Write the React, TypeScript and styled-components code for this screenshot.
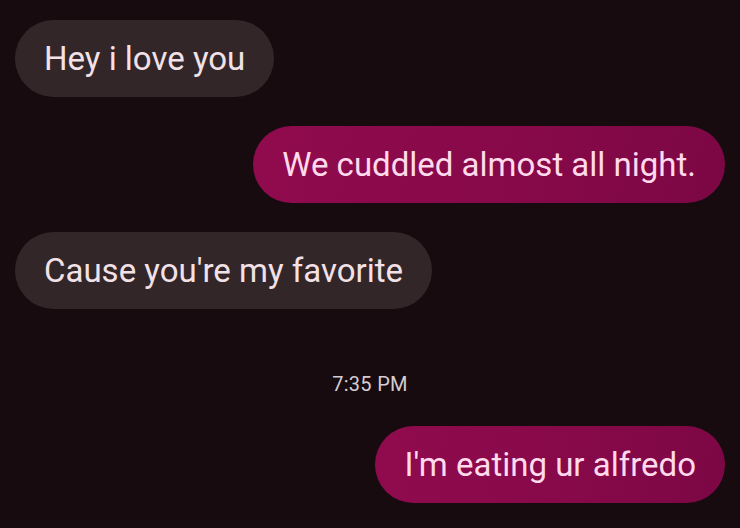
import React from 'react'
import styled, { createGlobalStyle } from 'styled-components'

const messages = [
  { id: 1, text: 'Hey i love you', mine: false },
  { id: 2, text: 'We cuddled almost all night.', mine: true },
  { id: 3, text: "Cause you're my favorite", mine: false },
]

export default function App() {
  return (
    <>
      <GlobalStyle />
      <Thread>
        {messages.map((m) => (
          <Row key={m.id} $mine={m.mine}>
            <Bubble $mine={m.mine}>{m.text}</Bubble>
          </Row>
        ))}
        <Timestamp>7:35 PM</Timestamp>
        <Row $mine>
          <Bubble $mine>I'm eating ur alfredo</Bubble>
        </Row>
      </Thread>
    </>
  )
}

const GlobalStyle = createGlobalStyle`
  html, body {
    margin: 0;
    padding: 0;
    background: #170b10;
  }
`

const Thread = styled.div`
  width: 740px;
  height: 528px;
  box-sizing: border-box;
  padding: 20px 15px 0;
  display: flex;
  flex-direction: column;
  gap: 29px;
  background: #170b10;
  font-family: Roboto, 'Noto Sans', sans-serif;
  overflow: hidden;
`

const Row = styled.div<{ $mine?: boolean }>`
  display: flex;
  justify-content: ${(p) => (p.$mine ? 'flex-end' : 'flex-start')};
`

const Bubble = styled.div<{ $mine?: boolean }>`
  height: 77px;
  box-sizing: border-box;
  padding: 0 29px;
  display: flex;
  align-items: center;
  border-radius: 39px;
  font-size: 33px;
  letter-spacing: 0;
  color: ${(p) => (p.$mine ? '#ffd9ec' : '#f2e1e7')};
  background: ${(p) =>
    p.$mine
      ? 'linear-gradient(100deg, #900b4e 0%, #870949 55%, #7c0744 100%)'
      : '#332629'};
`

const Timestamp = styled.div`
  margin: 33px 0 0;
  text-align: center;
  font-size: 20px;
  letter-spacing: 0.3px;
  line-height: 26px;
  color: #d6cdd0;
`
